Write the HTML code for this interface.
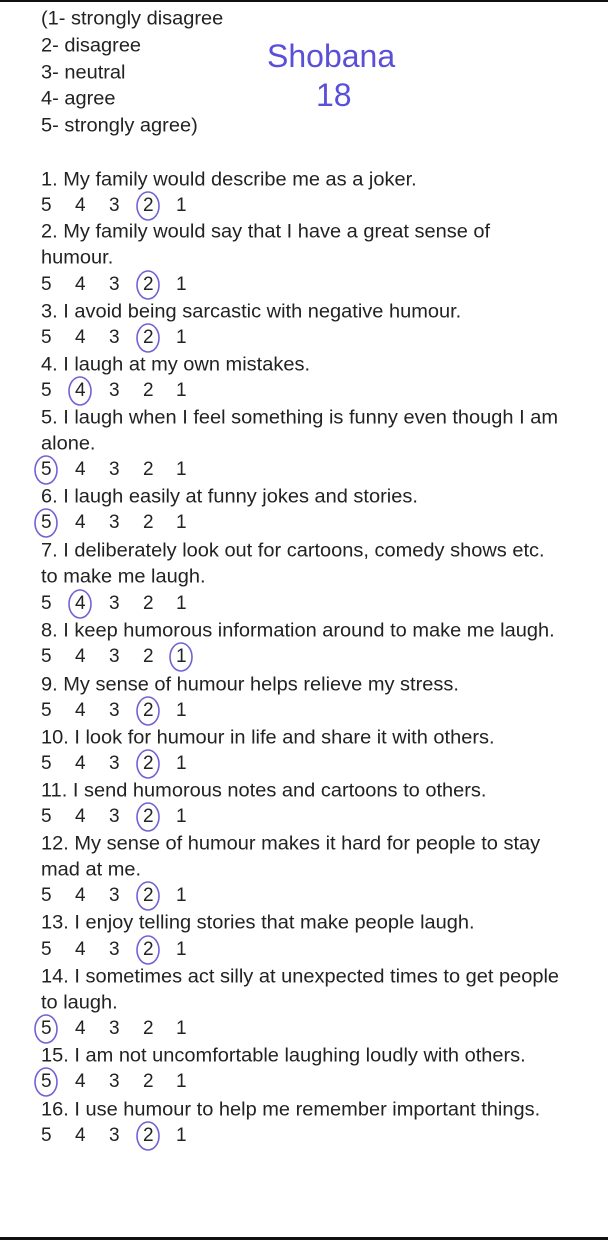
<!DOCTYPE html>
<html><head><meta charset="utf-8"><style>
html,body{margin:0;padding:0;background:#fff;}
body{width:608px;height:1240px;position:relative;overflow:hidden;font-family:"Liberation Sans",Arial,sans-serif;color:#222;}
.t{position:absolute;left:41px;font-size:20px;line-height:20px;white-space:nowrap;transform-origin:0 50%;transform:scaleY(0.95);}
.n{position:absolute;font-size:19px;line-height:20px;}
.bar{position:absolute;left:0;width:608px;background:#111;}
.s{position:absolute;color:#5a4fd8;font-size:32px;line-height:36px;}
</style></head><body>
<div class="bar" style="top:0;height:2px"></div>
<div class="bar" style="top:1237px;height:3px"></div>
<div class="s" style="left:267px;top:38px">Shobana</div>
<div class="s" style="left:316px;top:77px">18</div>
<div class="t" style="top:9px">(1- strongly disagree</div>
<div class="t" style="top:36px">2- disagree</div>
<div class="t" style="top:63px">3- neutral</div>
<div class="t" style="top:89px">4- agree</div>
<div class="t" style="top:116px">5- strongly agree)</div>
<div class="t" style="top:170px">1. My family would describe me as a joker.</div>
<div class="t" style="top:222px">2. My family would say that I have a great sense of</div>
<div class="t" style="top:248px">humour.</div>
<div class="t" style="top:302px">3. I avoid being sarcastic with negative humour.</div>
<div class="t" style="top:355px">4. I laugh at my own mistakes.</div>
<div class="t" style="top:408px">5. I laugh when I feel something is funny even though I am</div>
<div class="t" style="top:434px">alone.</div>
<div class="t" style="top:487px">6. I laugh easily at funny jokes and stories.</div>
<div class="t" style="top:541px">7. I deliberately look out for cartoons, comedy shows etc.</div>
<div class="t" style="top:567px">to make me laugh.</div>
<div class="t" style="top:621px">8. I keep humorous information around to make me laugh.</div>
<div class="t" style="top:675px">9. My sense of humour helps relieve my stress.</div>
<div class="t" style="top:728px">10. I look for humour in life and share it with others.</div>
<div class="t" style="top:781px">11. I send humorous notes and cartoons to others.</div>
<div class="t" style="top:834px">12. My sense of humour makes it hard for people to stay</div>
<div class="t" style="top:860px">mad at me.</div>
<div class="t" style="top:913px">13. I enjoy telling stories that make people laugh.</div>
<div class="t" style="top:967px">14. I sometimes act silly at unexpected times to get people</div>
<div class="t" style="top:993px">to laugh.</div>
<div class="t" style="top:1046px">15. I am not uncomfortable laughing loudly with others.</div>
<div class="t" style="top:1100px">16. I use humour to help me remember important things.</div>
<div id="nums"></div>
<svg width="608" height="1240" style="position:absolute;left:0;top:0" fill="none" stroke="#6f63d4" stroke-width="1.6">
<g id="c"></g>
</svg>
<script>
var ys=[196,275,328,381,460,513,594,647,701,754,807,886,940,1019,1072,1126];
var v=[2,2,2,4,5,5,4,1,2,2,2,2,2,5,5,2];
var xs={5:41,4:75,3:109,2:143,1:176};
var h='',c='';
for(var i=0;i<ys.length;i++){
 [5,4,3,2,1].forEach(function(k){h+='<div class="n" style="left:'+xs[k]+'px;top:'+ys[i]+'px">'+k+'</div>';});
 var cx=xs[v[i]]+5, cy=ys[i]+10;
 c+='<ellipse cx="'+cx+'" cy="'+cy+'" rx="11" ry="14"/>';
}
document.getElementById('nums').innerHTML=h;
document.getElementById('c').innerHTML=c;
</script>
</body></html>
